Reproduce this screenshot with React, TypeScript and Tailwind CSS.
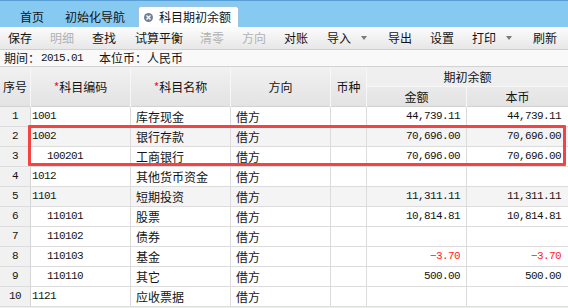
const cjk = "font-['Noto_Sans_CJK_SC','Noto_Sans',sans-serif]";
const mono = "font-['Liberation_Mono','DejaVu_Sans_Mono',monospace] text-[11px] tracking-[-0.6px]";

interface Row {
  no: number;
  code: string;
  name: string;
  dir: string;
  amount: string;
  level: number;
  shaded?: boolean;
}

const rows: Row[] = [
  { no: 1, code: "1001", name: "库存现金", dir: "借方", amount: "44,739.11", level: 1 },
  { no: 2, code: "1002", name: "银行存款", dir: "借方", amount: "70,696.00", level: 1, shaded: true },
  { no: 3, code: "100201", name: "工商银行", dir: "借方", amount: "70,696.00", level: 2 },
  { no: 4, code: "1012", name: "其他货币资金", dir: "借方", amount: "", level: 1 },
  { no: 5, code: "1101", name: "短期投资", dir: "借方", amount: "11,311.11", level: 1, shaded: true },
  { no: 6, code: "110101", name: "股票", dir: "借方", amount: "10,814.81", level: 2 },
  { no: 7, code: "110102", name: "债券", dir: "借方", amount: "", level: 2 },
  { no: 8, code: "110103", name: "基金", dir: "借方", amount: "-3.70", level: 2 },
  { no: 9, code: "110110", name: "其它", dir: "借方", amount: "500.00", level: 2 },
  { no: 10, code: "1121", name: "应收票据", dir: "借方", amount: "", level: 1 },
];

const tools: { label: string; w: string; disabled?: boolean; menu?: boolean }[] = [
  { label: "保存", w: "w-[42px]" },
  { label: "明细", w: "w-[42px]", disabled: true },
  { label: "查找", w: "w-[43px]" },
  { label: "试算平衡", w: "w-[65px]" },
  { label: "清零", w: "w-[42px]", disabled: true },
  { label: "方向", w: "w-[42px]", disabled: true },
  { label: "对账", w: "w-[43px]" },
  { label: "导入", w: "w-[61px]", menu: true },
  { label: "导出", w: "w-[42px]" },
  { label: "设置", w: "w-[42px]" },
  { label: "打印", w: "w-[61px]", menu: true },
  { label: "刷新", w: "w-[40px]" },
];

const cols = "grid grid-cols-[31px_100px_100px_100px_36px_100px_101px]";

function Caret() {
  return <span className="ml-[10px] inline-block h-0 w-0 border-x-[3.5px] border-t-[4px] border-x-transparent border-t-[#7a7a7a]" />;
}

export default function App() {
  return (
    <div className={`relative h-[308px] w-[568px] overflow-hidden bg-white text-[12px] text-[#141414] ${cjk}`}>
      {/* tab bar */}
      <div className="flex h-[27px] items-end border-t border-[#5a9ed6] bg-[#86c9f1]">
        <div className="ml-[20px] flex h-[21px] items-center">首页</div>
        <div className="ml-[21px] flex h-[21px] items-center">初始化导航</div>
        <div className="ml-[13px] flex h-[21px] w-[101px] items-center rounded-t-[3px] border border-b-0 border-[#9cc3e0] bg-white pl-[5px]">
          <span className="mr-[6px] flex h-[9px] w-[9px] items-center justify-center rounded-full bg-[#6f8398]">
            <svg width="5" height="5" viewBox="0 0 5 5">
              <path d="M0.5 0.5 L4.5 4.5 M4.5 0.5 L0.5 4.5" stroke="#fff" strokeWidth="1.3" />
            </svg>
          </span>
          科目期初余额
        </div>
      </div>

      {/* toolbar */}
      <div className="flex h-[23px] items-center border-b border-[#cfcfcf] bg-gradient-to-b from-[#fcfcfc] to-[#e7e7e7] pl-[8px]">
        {tools.map((t) => (
          <div key={t.label} className={`flex shrink-0 items-center ${t.w} ${t.disabled ? "text-[#b2b2b2]" : ""}`}>
            {t.label}
            {t.menu && <Caret />}
          </div>
        ))}
      </div>

      {/* info line */}
      <div className="flex h-[16px] items-center bg-[#f9f9f9] pl-[4px] leading-none">
        <span>期间：</span>
        <span className={`${mono} ml-[1px]`}>2015.01</span>
        <span className="ml-[16px]">本位币：人民币</span>
      </div>

      {/* header */}
      <div className={`${cols} h-[41px] grid-rows-[20px_20px] border-y border-[#d2d2d2] bg-gradient-to-b from-[#f1f1f1] to-[#e3e3e3]`}>
        <div className="row-span-2 flex items-center justify-center border-r border-[#f7f7f7]">序号</div>
        <div className="row-span-2 flex items-center justify-center border-r border-[#f7f7f7]">
          <span className="text-[#e8162f]">*</span>科目编码
        </div>
        <div className="row-span-2 flex items-center justify-center border-r border-[#f7f7f7]">
          <span className="text-[#e8162f]">*</span>科目名称
        </div>
        <div className="row-span-2 flex items-center justify-center border-r border-[#f7f7f7]">方向</div>
        <div className="row-span-2 flex items-center justify-center border-r border-[#f7f7f7]">币种</div>
        <div className="col-span-2 flex items-center justify-center border-b border-[#f7f7f7] bg-[#efefef]">期初余额</div>
        <div className="flex items-center justify-center border-r border-[#f7f7f7]">金额</div>
        <div className="flex items-center justify-center">本币</div>
      </div>

      {/* body */}
      {rows.map((r) => {
        const neg = r.amount.startsWith("-");
        const amt = neg ? "−" + r.amount.slice(1) : r.amount;
        const bg = r.shaded ? "bg-[#f4f4f4]" : "bg-white";
        return (
          <div key={r.no} className={`${cols} h-[20px] border-b border-[#dcdcdc] ${bg}`}>
            <div className={`${mono} flex items-center justify-center border-r border-[#d6d6d6] bg-[#f1f1f1]`}>{r.no}</div>
            <div className={`${mono} flex items-center border-r border-[#dcdcdc] ${r.level === 2 ? "pl-[16px]" : "pl-[1px]"}`}>{r.code}</div>
            <div className="flex items-center border-r border-[#dcdcdc] pl-[5px]">{r.name}</div>
            <div className="flex items-center border-r border-[#dcdcdc] pl-[5px]">{r.dir}</div>
            <div className="border-r border-[#dcdcdc]" />
            <div className={`${mono} flex items-center justify-end border-r border-[#dcdcdc] pr-[6px] ${neg ? "text-[#ff1a1a]" : ""}`}>{amt}</div>
            <div className={`${mono} flex items-center justify-end pr-[7px] ${neg ? "text-[#ff1a1a]" : ""}`}>{amt}</div>
          </div>
        );
      })}
      <div className={`${cols} h-[20px]`}>
        <div className="bg-[#f1f1f1]" />
        <div className="col-span-6 bg-[#e6f6e6]" />
      </div>

      {/* highlight box */}
      <div className="absolute left-[28px] top-[125px] h-[41px] w-[538px] rounded-[1px] border-[3px] border-[#f44343]" />
    </div>
  );
}
